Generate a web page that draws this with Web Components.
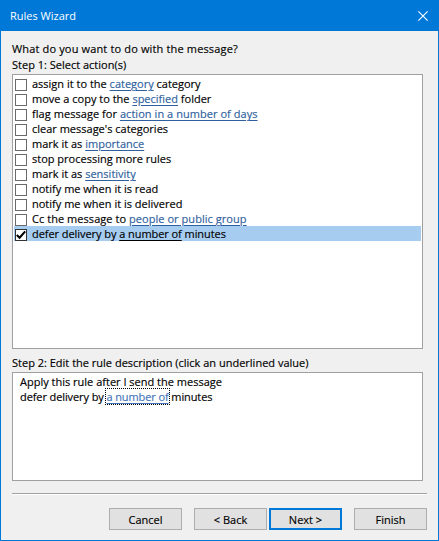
<!DOCTYPE html>
<html lang="en"><head><meta charset="utf-8"><title>Rules Wizard</title>
<style>
html,body{margin:0;padding:0;background:#f0f0f0}
body{font:11px/15px "Open Sans","Noto Sans",sans-serif;color:#000;width:439px;height:541px;overflow:hidden}
</style></head><body>
<rules-dialog heading="Rules Wizard">
  <field-label slot="top" style="letter-spacing:.15px">What do you want to do with the message?</field-label>
  <field-label slot="top">Step 1: Select action(s)</field-label>
  <action-list slot="list">
    <action-row>assign it to the <u-link>category</u-link> category</action-row>
    <action-row>move a copy to the <u-link>specified</u-link> folder</action-row>
    <action-row style="letter-spacing:.05px">flag message for <u-link>action in a number of days</u-link></action-row>
    <action-row>clear message's categories</action-row>
    <action-row>mark it as <u-link>importance</u-link></action-row>
    <action-row>stop processing more rules</action-row>
    <action-row>mark it as <u-link>sensitivity</u-link></action-row>
    <action-row>notify me when it is read</action-row>
    <action-row>notify me when it is delivered</action-row>
    <action-row style="letter-spacing:.05px">Cc the message to <u-link>people or public group</u-link></action-row>
    <action-row checked style="letter-spacing:-.06px">defer delivery by <u-link selected>a number of</u-link> minutes</action-row>
  </action-list>
  <field-label slot="step2">Step 2: Edit the rule description (click an underlined value)</field-label>
  <desc-box slot="desc">
    <div>Apply this rule after I send the message</div>
    <div style="letter-spacing:-.1px">defer delivery by <u-link focused>a number of</u-link> minutes</div>
  </desc-box>
  <wiz-button slot="b1">Cancel</wiz-button>
  <wiz-button slot="b2">&lt; Back</wiz-button>
  <wiz-button slot="b2" primary>Next &gt;</wiz-button>
  <wiz-button slot="b3">Finish</wiz-button>
</rules-dialog>
<script>
function def(name,css,html,extra){
  customElements.define(name,class extends HTMLElement{
    constructor(){super();const r=this.attachShadow({mode:"open"});r.innerHTML=`<style>${css}</style>${html}`;}
    connectedCallback(){extra&&extra(this)}
  });
}
const F='font:11px/15px "Open Sans","Noto Sans",sans-serif;';
def("rules-dialog",`
:host{display:flex;flex-direction:column;box-sizing:border-box;width:439px;height:541px;border:1px solid #0078d7;border-top:0;background:#f0f0f0;-webkit-text-stroke:.15px currentColor}
.title{flex:none;height:31px;margin:0 -1px;background:#0078d7;color:#fff;display:flex;align-items:center;justify-content:space-between;padding:0 11px 0 10px;box-sizing:border-box;-webkit-text-stroke:0}
.title span{${F}padding-bottom:1px}
.title svg{display:block}
.body{flex:1;display:flex;flex-direction:column;padding:10px 11px 0 11px}
.list{margin:1px 4px 0 0;height:275px;flex:none}
.step2{margin-top:6px}
.desc{margin:1px 4px 0 0;height:109px;flex:none}
hr{border:0;height:1px;background:#a0a0a0;margin:12px 0 0 0;flex:none;box-shadow:0 1px 0 #fff}
.btns{display:flex;margin:14px 0 0 97px;justify-content:space-between}
.g{display:flex;gap:2px}
`,`
<div class="title"><span id="h"></span>
<svg width="10" height="10" viewBox="0 0 10 10"><path d="M.4.4 9.6 9.6M9.6.4.4 9.6" stroke="#fff" stroke-width="1.05" fill="none"/></svg></div>
<div class="body">
<slot name="top"></slot>
<div class="list"><slot name="list"></slot></div>
<div class="step2"><slot name="step2"></slot></div>
<div class="desc"><slot name="desc"></slot></div>
<hr>
<div class="btns"><slot name="b1"></slot><div class="g"><slot name="b2"></slot></div><slot name="b3"></slot></div>
</div>`,el=>{el.shadowRoot.getElementById("h").textContent=el.getAttribute("heading")});
def("field-label",`:host{display:block;${F}line-height:16px;color:#000;white-space:nowrap}`,`<slot></slot>`);
def("action-list",`:host{display:block;box-sizing:border-box;height:100%;background:#fff;border:1px solid #a0a0a0;padding:1px}`,`<slot></slot>`);
def("action-row",`
:host{display:flex;align-items:flex-start;height:15px;padding-left:1px;${F}white-space:nowrap;color:#000}
:host([checked]){background:#a6cdf0}
.box{flex:none;box-sizing:border-box;width:12px;height:12px;margin:3px 5px 0 0;border:1px solid #6a6a6a;background:#fff;display:flex;align-items:center;justify-content:center}
:host([checked]) .box{border-color:#333}
.box svg{display:none}
:host([checked]) .box svg{display:block}
`,`<div class="box"><svg width="10" height="10" viewBox="0 0 10 10"><path d="M.8 5 3.6 7.8 9.2 1.4" stroke="#000" stroke-width="2.1" fill="none"/></svg></div><div class="t"><slot></slot></div>`);
def("u-link",`
:host{display:inline;color:#2f5f9e;text-decoration:underline;text-underline-offset:2px}
:host([selected]){color:#000}
:host([focused]){outline:1px dotted #000;outline-offset:0;color:#3f74b8}
`,`<slot></slot>`);
def("desc-box",`:host{display:block;box-sizing:border-box;height:100%;background:#fff;border:1px solid #a0a0a0;padding:1px 7px;${F}white-space:nowrap}`,`<slot></slot>`);
def("wiz-button",`
:host{display:flex;align-items:center;justify-content:center;box-sizing:border-box;width:73px;height:22px;background:#e1e1e1;border:1px solid #adadad;${F}color:#000}
:host([primary]){border:2px solid #0078d7}
`,`<slot></slot>`);
</script>
</body></html>
